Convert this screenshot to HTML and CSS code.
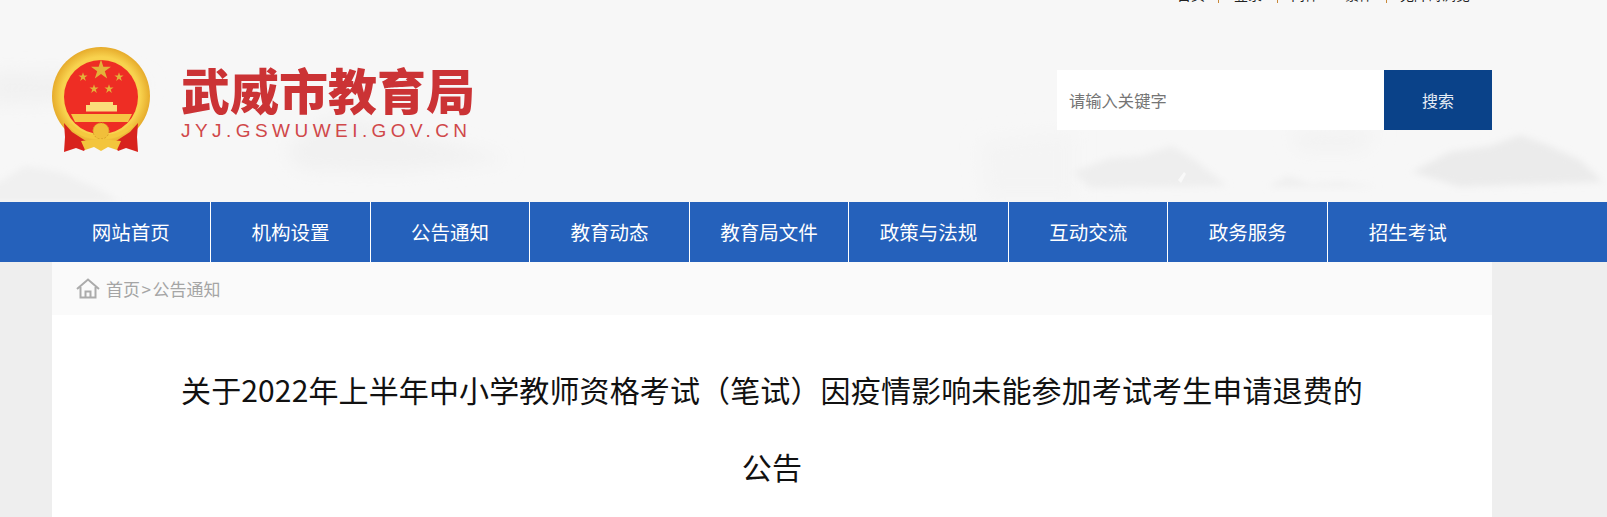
FILE: index.html
```html
<!DOCTYPE html>
<html lang="zh-CN">
<head>
    <meta charset="UTF-8">
    <title>武威市教育局</title>
    <link rel="stylesheet" href="styles.css">
</head>
<body>
    <header class="header">
        <svg class="header-bg" width="1607" height="202" viewBox="0 0 1607 202" aria-hidden="true">
            <defs>
                <filter id="soft" x="-20%" y="-40%" width="140%" height="180%"><feGaussianBlur stdDeviation="3.5"/></filter>
                <filter id="haze" x="-20%" y="-60%" width="140%" height="220%"><feGaussianBlur stdDeviation="9"/></filter>
            </defs>
            <g filter="url(#haze)">
                <path fill="#f1f1f1" d="M-10 72 L60 74 L110 68 L150 84 L100 100 L-10 104 Z"/>
                <path fill="#f1f1f1" d="M285 150 L326 116 L370 122 L430 138 L510 160 L400 172 L300 170 Z"/>
                <path fill="#f2f2f2" d="M1290 132 L1380 130 L1360 150 L1300 150 Z"/>
                <path fill="#f4f4f4" d="M980 140 L1075 130 L1075 200 L985 200 Z"/>
            </g>
            <g filter="url(#soft)">
                <path fill="#f0f0f0" d="M-10 188 L25 166 L60 172 L100 190 L120 202 L-10 202 Z"/>
                <path fill="#eeeeee" d="M1073 172 L1110 158 L1140 156 L1172 146 L1195 160 L1227 186 L1090 188 Z"/>
                <path fill="#efefef" d="M1268 187 L1288 176 L1310 184 L1340 182 L1378 187 Z"/>
                <path fill="#ebebeb" d="M1412 172 L1450 152 L1490 146 L1520 135 L1545 144 L1580 160 L1603 182 L1460 187 Z"/>
            </g>
            <path fill="#f9f9f9" d="M1178 180 L1184 172 L1186 174 L1181 183 Z"/>
        </svg>
        <div class="wrap">
            <div class="top-links">
                <a>首页</a><i></i>
                <a class="login">登录</a><i></i>
                <a class="lang">简体</a><a>繁体</a><i></i>
                <a>无障碍浏览</a>
            </div>
            <div class="head-row">
                <div class="logo">
                    <svg class="emblem" width="98" height="105" viewBox="0 0 98 105" aria-hidden="true">
                        <defs>
                            <polygon id="star" points="0,-10 2.25,-3.09 9.51,-3.09 3.63,1.18 5.88,8.09 0,3.82 -5.88,8.09 -3.63,1.18 -9.51,-3.09 -2.25,-3.09"/>
                            <radialGradient id="gold">
                                <stop offset="80%" stop-color="#f8d24e"/>
                                <stop offset="100%" stop-color="#e6ab2b"/>
                            </radialGradient>
                        </defs>
                        <circle cx="49" cy="49" r="49" fill="url(#gold)"/>
                        <circle cx="49" cy="50" r="37" fill="#ee2d24"/>
                        <g fill="#e3b23a">
                            <use href="#star" transform="translate(49 23) scale(1.05)"/>
                            <use href="#star" transform="translate(31 30) scale(.48)"/>
                            <use href="#star" transform="translate(67 30) scale(.48)"/>
                            <use href="#star" transform="translate(42 42) scale(.48)"/>
                            <use href="#star" transform="translate(57 42) scale(.48)"/>
                        </g>
                        <path fill="#fbdc7a" d="M38 55 H61 V58 H65 V64.5 H34 V58 H38 Z"/>
                        <path fill="#f6c544" d="M19 67 H80 L76 75 H23 Z"/>
                        <path fill="#d8231d" d="M12 76 L20 85 L37 96 L32 104 L24 101 L12 105 L13 90 Z"/>
                        <path fill="#d8231d" d="M86 76 L78 85 L61 96 L66 104 L74 101 L86 105 L85 90 Z"/>
                        <path fill="none" stroke="#f5c93f" stroke-width="4" d="M18 78 Q30 91 49 90 Q68 91 80 78"/>
                        <circle cx="49" cy="84" r="8" fill="#f1bf3a" stroke="#d9a02a" stroke-dasharray="2 1.5"/>
                        <path fill="#f3c53c" d="M29 94 L49 92 L69 94 L65 103 L56 100 L49 104 L42 100 L33 103 Z"/>
                    </svg>
                    <div class="logo-text">
                        <div class="logo-name">武威市教育局</div>
                        <div class="logo-url">JYJ.GSWUWEI.GOV.CN</div>
                    </div>
                </div>
                <div class="search">
                    <input type="text" placeholder="请输入关键字">
                    <button>搜索</button>
                </div>
            </div>
        </div>
    </header>

    <nav class="nav">
        <ul class="nav-list">
            <li>网站首页</li>
            <li>机构设置</li>
            <li>公告通知</li>
            <li>教育动态</li>
            <li>教育局文件</li>
            <li>政策与法规</li>
            <li>互动交流</li>
            <li>政务服务</li>
            <li>招生考试</li>
        </ul>
    </nav>

    <main class="main">
        <div class="crumb">
            <svg width="24" height="21" viewBox="0 0 24 21" aria-hidden="true">
                <path fill="none" stroke="#ababab" stroke-width="2" d="M1 11 L12 1.5 L23 11 M4.5 9 V19.5 H19.5 V9 M9.5 19.5 V13.5 H14.5 V19.5"/>
            </svg>
            <span>首页<b class="crumb-sep">&gt;</b>公告通知</span>
        </div>
        <h1 class="title">关于2022年上半年中小学教师资格考试（笔试）因疫情影响未能参加考试考生申请退费的公告</h1>
    </main>
</body>
</html>
```

FILE: styles.css
```css
* {
    margin: 0;
    padding: 0;
    box-sizing: border-box;
}

html, body {
    height: 517px;
    overflow: hidden;
}

body {
    background: #eeeeee;
    font-family: "Noto Sans CJK SC", "Liberation Sans", sans-serif;
    display: flex;
    flex-direction: column;
}

.header {
    height: 202px;
    background: #f7f7f7;
    position: relative;
    overflow: hidden;
    flex: none;
}

.header-bg {
    position: absolute;
    left: 0;
    top: 0;
}

.wrap {
    position: relative;
    width: 1440px;
    margin-left: 52px;
}

.top-links {
    height: 20px;
    margin-top: -16px;
    padding-right: 22px;
    display: flex;
    justify-content: flex-end;
    align-items: center;
    font-size: 14px;
    line-height: 20px;
    color: #222;
}

.top-links i {
    width: 1px;
    height: 18px;
    margin: 0 13px;
    background: #c8893a;
}

.top-links .login {
    padding: 0 2px;
}

.top-links .lang {
    margin-right: 26px;
}

.head-row {
    display: flex;
    justify-content: space-between;
    align-items: flex-start;
    padding-top: 43px;
}

.logo {
    display: flex;
}

.emblem {
    flex: none;
    margin-right: 31px;
}

.logo-text {
    padding-top: 17px;
}

.logo-name {
    font-size: 49px;
    line-height: 50px;
    font-weight: 900;
    color: #cb3335;
    white-space: nowrap;
}

.logo-url {
    font-size: 19px;
    line-height: 20px;
    margin-top: 7px;
    letter-spacing: 4.45px;
    color: #d0484a;
    font-family: "Liberation Sans", sans-serif;
    white-space: nowrap;
}

.search {
    display: flex;
    margin-top: 23px;
    height: 60px;
}

.search input {
    width: 327px;
    border: none;
    outline: none;
    padding-left: 12px;
    font-size: 16.3px;
    font-family: inherit;
    background: #fff;
}

.search input::placeholder {
    color: #757575;
}

.search button {
    width: 108px;
    border: none;
    background: #0a4289;
    color: #e6ecf5;
    font-size: 16px;
    font-family: inherit;
}

.nav {
    height: 60px;
    background: #2561bb;
    flex: none;
}

.nav-list {
    list-style: none;
    display: flex;
    margin-left: 51.6px;
}

.nav-list li {
    flex: 0 0 159.55px;
    height: 60px;
    line-height: 60px;
    text-align: center;
    font-size: 19.5px;
    color: #fff;
    border-right: 1px solid #fff;
}

.nav-list li:last-child {
    border-right: none;
}

.main {
    width: 1440px;
    margin-left: 52px;
    flex: 1;
    background: #fff;
}

.crumb {
    height: 53px;
    background: #fafafa;
    padding-left: 24px;
    display: flex;
    align-items: center;
    gap: 6px;
    font-size: 17px;
    color: #a5a5a5;
}

.crumb-sep {
    font-weight: 400;
    margin: 0 1.5px;
}

.title {
    width: 1200px;
    margin: 36px auto 0;
    font-size: 30px;
    letter-spacing: .13px;
    line-height: 77px;
    font-weight: 400;
    text-align: center;
    color: #111;
}
```
